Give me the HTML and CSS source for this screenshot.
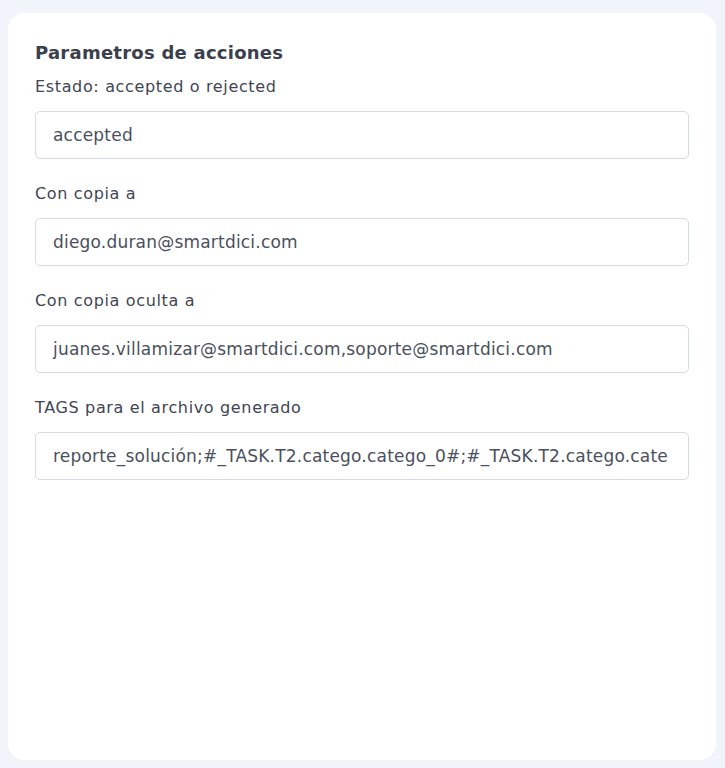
FILE: index.html
```html
<!DOCTYPE html>
<html lang="es">
<head>
<meta charset="utf-8">
<title>Parametros de acciones</title>
<link rel="stylesheet" href="styles.css">
</head>
<body>
<main class="card">
  <h2 class="title">Parametros de acciones</h2>
  <div class="group first">
    <label class="label">Estado: accepted o rejected</label>
    <div class="field"><span class="value">accepted</span></div>
  </div>
  <div class="group">
    <label class="label">Con copia a</label>
    <div class="field"><span class="value">diego.duran@smartdici.com</span></div>
  </div>
  <div class="group">
    <label class="label">Con copia oculta a</label>
    <div class="field"><span class="value">juanes.villamizar@smartdici.com,soporte@smartdici.com</span></div>
  </div>
  <div class="group">
    <label class="label">TAGS para el archivo generado</label>
    <div class="field"><span class="value">reporte_solución;#_TASK.T2.catego.catego_0#;#_TASK.T2.catego.cate</span></div>
  </div>
</main>
</body>
</html>
```
FILE: styles.css
```css
html, body {
  margin: 0;
  padding: 0;
  background: #f1f4fb;
}
body {
  padding: 13px 9px 8px 8px;
  font-family: "DejaVu Sans", "Open Sans", sans-serif;
  color: #3e4452;
}
.card {
  background: #ffffff;
  border-radius: 16px;
  height: 747px;
  box-sizing: border-box;
  padding: 26px 27px 0 27px;
}
.title {
  margin: 0;
  font-size: 18px;
  font-weight: 600;
  letter-spacing: 0.25px;
  line-height: 27px;
  color: #3b404d;
}
.group {
  display: flex;
  flex-direction: column;
  margin-top: 24px;
}
.group.first {
  margin-top: 10px;
}
.label {
  font-size: 16px;
  letter-spacing: 0.65px;
  line-height: 22px;
  color: #3f4553;
  margin-bottom: 13px;
}
.field {
  height: 48px;
  box-sizing: border-box;
  border: 1px solid #d6dae2;
  border-radius: 5px;
  padding: 0 16px 0 17px;
  display: flex;
  align-items: center;
  font-size: 17px;
  letter-spacing: 0.2px;
  color: #4a505d;
}
.value {
  white-space: nowrap;
  min-width: 0;
}
```
